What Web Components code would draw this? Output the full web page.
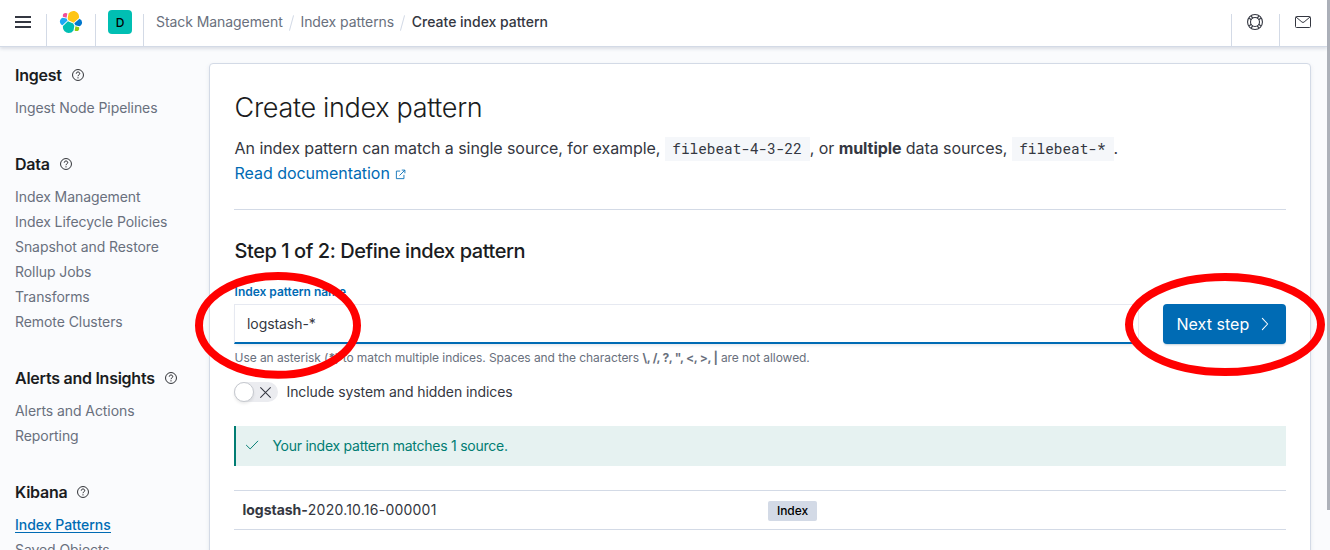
<!DOCTYPE html>
<html lang="en">
<head>
<meta charset="utf-8">
<title>Create index pattern</title>
<style>
html,body{margin:0;height:550px;overflow:hidden;background:#fafbfd}
body{font-family:Inter,"Liberation Sans",sans-serif;font-size:14px;letter-spacing:-.005em;color:#343741}
</style>
</head>
<body>
<kb-app></kb-app>
<script>
const define = (name, css, html) => customElements.define(name, class extends HTMLElement {
  constructor() {
    super();
    this.attachShadow({ mode: 'open' }).innerHTML = `<style>*{box-sizing:border-box}${css}</style>${html}`;
  }
});

const paths = {
  menu: '<path d="M0 3h16M0 8h16M0 13h16" stroke="#343741" stroke-width="2"/>',
  help: '<circle cx="8" cy="8" r="7.3" fill="none" stroke="currentColor" stroke-width="1.2"/><path d="M5.7 6.2C5.7 4.8 6.7 4 8 4s2.3.8 2.3 2.1c0 1.7-2.3 1.7-2.3 3.5" fill="none" stroke="currentColor" stroke-width="1.3"/><circle cx="8" cy="11.8" r=".85" fill="currentColor"/>',
  ring: '<g fill="none" stroke="currentColor"><circle cx="8" cy="8" r="7.45" stroke-width="1.1"/><circle cx="8" cy="8" r="4.5" stroke-width="1.1"/><path d="M2.2 4.3l2.2 1.5M4.3 2.2l1.5 2.2M13.8 4.3l-2.2 1.5M11.7 2.2l-1.5 2.2M2.2 11.7l2.2-1.5M4.3 13.8l1.5-2.2M13.8 11.7l-2.2-1.5M11.7 13.8l-1.5-2.2" stroke-width="1.2"/></g>',
  mail: '<rect x=".5" y="2.5" width="15" height="11" rx="1" fill="none" stroke="currentColor"/><path d="M1 3l5.9 5a1.7 1.7 0 0 0 2.2 0L15 3" fill="none" stroke="currentColor"/>',
  popout: '<g fill="none" stroke="currentColor" stroke-width="1.25"><path d="M7.5 3H2v11h11V8.5M9.8 1.6h4.6v4.6M14.2 1.8L6.5 9.5"/></g>',
  right: '<path d="M5 1.5l6 6.5-6 6.5" fill="none" stroke="currentColor" stroke-width="1.2" stroke-linecap="round" stroke-linejoin="round"/>',
  check: '<path d="M1.6 8.3l4.3 4.2L14.6 3.6" fill="none" stroke="currentColor" stroke-width="1.1" stroke-linecap="round" stroke-linejoin="round"/>',
  cross: '<path d="M2 2l12 12M14 2L2 14" fill="none" stroke="currentColor" stroke-width="1.3" stroke-linecap="round"/>'
};
customElements.define('kb-icon', class extends HTMLElement {
  constructor() { super(); this.attachShadow({ mode: 'open' }); }
  connectedCallback() {
    const s = this.getAttribute('size') || 16;
    this.shadowRoot.innerHTML = `<style>:host{display:inline-flex;flex:none}svg{display:block}</style><svg width="${s}" height="${s}" viewBox="0 0 16 16">${paths[this.getAttribute('type')]}</svg>`;
  }
});

define('kb-logo', ':host{display:block;height:24px}svg{display:block}', `
<svg width="24" height="24" viewBox="0 0 32 32">
<path fill="#FEC514" d="M12.58 13.787l7.002 3.211 7.066-6.213a7.85 7.85 0 0 0 .152-1.557c0-4.287-3.464-7.774-7.722-7.774a7.67 7.67 0 0 0-6.327 3.36l-1.176 6.126z"/>
<path fill="#00BFB3" d="M5.333 21.228a7.964 7.964 0 0 0-.154 1.58c0 4.301 3.475 7.799 7.747 7.799a7.724 7.724 0 0 0 6.389-3.406l1.166-6.108-1.556-2.989-7.03-3.218z"/>
<path fill="#F04E98" d="M5.288 9.067l4.8 1.138L11.14 4.73a3.785 3.785 0 0 0-2.28-.774 3.8 3.8 0 0 0-3.79 3.815c0 .444.074.88.218 1.296z"/>
<path fill="#1BA9F5" d="M4.872 10.214c-2.145.714-3.643 2.786-3.643 5.067 0 2.22 1.365 4.204 3.413 4.987l6.735-6.119-1.237-2.657z"/>
<path fill="#93C90E" d="M20.873 27.202c.652.504 1.45.782 2.27.782a3.8 3.8 0 0 0 3.79-3.814c0-.462-.073-.898-.218-1.296l-4.796-1.127z"/>
<path fill="#07C" d="M21.848 20.456l5.28 1.24c2.146-.714 3.645-2.786 3.645-5.068a5.324 5.324 0 0 0-3.42-4.968l-6.905 6.069z"/>
</svg>`);

define('kb-header', `
:host{display:flex;height:47px;width:1327px;background:#fff;border-bottom:1px solid #d3dae6;box-shadow:0 2px 3px rgba(152,162,179,.3);color:#343741;position:relative}
.cell{display:flex;justify-content:center;align-items:center;height:44px}
.end{justify-content:flex-start;padding-left:15px;width:47px}
.sep{width:1px;margin-top:14px;height:32px;background:#d3dae6;flex:none}
.space{width:24px;height:24px;border-radius:4px;background:#00bfb3;color:#000;font-weight:500;font-size:12px;display:flex;align-items:center;justify-content:center}
nav{display:flex;align-items:center;height:43px;padding-left:12px;color:#69707d;flex:1;white-space:nowrap}
i{width:1px;height:16px;margin:2px 8.4px 0;background:#d3dae6;transform:rotate(15deg)}
b{font-weight:500;color:#343741;letter-spacing:-.001em}`, `
<div class="cell" style="width:46px"><kb-icon type="menu"></kb-icon></div><div class="sep"></div>
<div class="cell" style="width:48px"><kb-logo></kb-logo></div><div class="sep"></div>
<div class="cell" style="width:48px;margin-right:-1px"><div class="space">D</div></div><div class="sep"></div>
<nav><span>Stack Management</span><i></i><span>Index patterns</span><i></i><b>Create index pattern</b></nav>
<div class="sep"></div><div class="cell end"><kb-icon type="ring"></kb-icon></div>
<div class="sep"></div><div class="cell end"><kb-icon type="mail"></kb-icon></div>`);

define('kb-nav-item', `:host{display:flex;align-items:center;height:25px;padding-bottom:2px;color:#69707d}
span{line-height:17px}:host([active]) span{color:#006bb4;font-weight:500;border-bottom:1px solid #006bb4;height:17px;line-height:18px;letter-spacing:-.001em}`, '<span><slot></slot></span>');

define('kb-nav-group', `:host{display:block;margin-bottom:31px}
header{display:flex;align-items:center;height:24px;gap:10px;margin-bottom:9px;font-size:16px;font-weight:600;color:#1a1c21;letter-spacing:-.016em}`,
'<header><slot name="title"></slot><kb-icon type="help" size="12"></kb-icon></header><slot></slot>');

define('kb-sidebar', ':host{display:block;width:209px;padding:16px 0 0 15px;flex:none;white-space:nowrap}', `
<kb-nav-group><span slot="title">Ingest</span><kb-nav-item>Ingest Node Pipelines</kb-nav-item></kb-nav-group>
<kb-nav-group><span slot="title">Data</span><kb-nav-item>Index Management</kb-nav-item><kb-nav-item>Index Lifecycle Policies</kb-nav-item><kb-nav-item>Snapshot and Restore</kb-nav-item><kb-nav-item>Rollup Jobs</kb-nav-item><kb-nav-item>Transforms</kb-nav-item><kb-nav-item>Remote Clusters</kb-nav-item></kb-nav-group>
<kb-nav-group><span slot="title">Alerts and Insights</span><kb-nav-item>Alerts and Actions</kb-nav-item><kb-nav-item>Reporting</kb-nav-item></kb-nav-group>
<kb-nav-group><span slot="title">Kibana</span><kb-nav-item active>Index Patterns</kb-nav-item><kb-nav-item>Saved Objects</kb-nav-item></kb-nav-group>`);

define('kb-code', `:host{display:inline-block;background:#f5f7fa;padding:0 8px 0 7.5px;height:24px;line-height:24px;font-family:"Roboto Mono","DejaVu Sans Mono",monospace;font-size:14.4px;letter-spacing:0;color:#343741}`, '<slot></slot>');

define('kb-intro', `:host{display:block;border-bottom:1px solid #d3dae6;height:122px;padding-left:.6px}
h1{margin:0;font-size:27px;font-weight:300;line-height:40px;color:#1a1c21;letter-spacing:-.012em}
p{margin:8px 0 0;font-size:16px;line-height:25px;white-space:nowrap;height:25px}
a{display:flex;align-items:center;height:23px;gap:5px;font-size:16px;color:#006bb4}
a span{letter-spacing:-.003em}
a kb-icon{margin-top:3px}
b{font-weight:700}`, `
<h1>Create index pattern</h1>
<p>An index pattern can match a single source, for example, <kb-code>filebeat-4-3-22</kb-code>, or <b>multiple</b> data sources, <kb-code>filebeat-*</kb-code>.</p>
<a><span>Read documentation</span><kb-icon type="popout" size="11"></kb-icon></a>`);

define('kb-button', `:host{display:flex;align-items:center;justify-content:space-between;width:123px;height:40px;padding:0 14px 0 13.5px;background:#006bb4;color:#fff;border-radius:4px;font-size:16px;letter-spacing:.002em;box-shadow:0 2px 2px -1px rgba(54,97,126,.3);white-space:nowrap}`, '<span><slot></slot></span><kb-icon type="right" size="14"></kb-icon>');

define('kb-switch', `:host{display:flex;align-items:center;gap:8.5px;height:20px}
.track{width:44px;height:20px;border-radius:10px;background:#ebecf0;display:flex;align-items:center;gap:5px}
.thumb{width:20px;height:20px;border-radius:50%;background:#fff;border:1px solid #c5c8ce;box-shadow:0 2px 3px rgba(0,0,0,.08)}
span{padding-bottom:2px;letter-spacing:-.006em}`,
'<div class="track"><div class="thumb"></div><kb-icon type="cross" size="13"></kb-icon></div><span><slot></slot></span>');

define('kb-form', `:host{display:block}
h2{margin:29px 0 0;padding-left:.6px;font-size:20px;line-height:24px;font-weight:500;color:#1a1c21;letter-spacing:-.022em}
.row{display:flex;gap:24px}
.field{flex:1}
label{display:block;margin-top:21px;padding-left:.6px;height:20px;line-height:15px;font-size:12px;font-weight:600;color:#006bb4;letter-spacing:-.002em}
.input{height:40px;border:1px solid #e6e9f1;border-bottom:2px solid #006bb4;padding:0 12px;line-height:38px;box-shadow:0 3px 3px -2px rgba(152,162,179,.3)}
.help{font-size:12px;line-height:18px;margin-top:5px;padding-left:.6px;color:#69707d;white-space:nowrap}
.help b{font-weight:700}
.help .chars{letter-spacing:-.29px}
kb-button{margin-top:41px}
kb-switch{margin-top:15px}`, `
<h2>Step 1 of 2: Define index pattern</h2>
<div class="row"><div class="field"><label>Index pattern name</label><div class="input">logstash-*</div>
<div class="help">Use an asterisk (<b>*</b>) to match multiple indices. Spaces and the characters <b class="chars">\\, /, ?, ", &lt;, &gt;, |</b> are not allowed.</div></div>
<kb-button>Next step</kb-button></div>
<kb-switch>Include system and hidden indices</kb-switch>`);

define('kb-callout', `:host{display:flex;align-items:center;height:40px;margin-top:24px;padding-left:9px;gap:13.4px;border-left:2px solid #017d73;background:#e6f2f1;color:#017d73;font-size:14px;letter-spacing:-.25px}
span{padding-bottom:2px}kb-icon{margin-bottom:2px}`, '<kb-icon type="check" size="14"></kb-icon><span><slot></slot></span>');

define('kb-table', `:host{display:grid;grid-template-columns:525.5px 1fr;align-items:center;height:40px;margin-top:24px;padding-left:8.5px;border:solid #d3dae6;border-width:1px 0}
.name{padding-bottom:2px;letter-spacing:.23px}
b{font-weight:700;letter-spacing:-.02px}.badge{justify-self:start;margin-top:2px;width:49px;text-align:center;height:20px;line-height:20px;border-radius:2px;background:#d3dae6;color:#000;font-size:12px;font-weight:500}`,
'<div class="name"><b>logstash-</b>2020.10.16-000001</div><div class="badge">Index</div>');

define('kb-panel', `:host{display:block;width:1102px;height:520px;margin-top:16px;padding:24px;border:1px solid #d3dae6;border-radius:4px;background:#fff;box-shadow:0 2px 4px rgba(152,162,179,.2)}`, '<slot></slot>');

define('kb-marks', ':host{position:absolute;inset:0;pointer-events:none}svg{display:block}', `
<svg width="1330" height="550" fill="none" stroke="#f00" stroke-width="8"><ellipse cx="278" cy="325.4" rx="79" ry="49.4"/><ellipse cx="1225" cy="324.5" rx="96" ry="47.5"/></svg>`);

define('kb-app', `:host{display:flex;height:550px;position:relative;overflow:hidden}
.page{width:1327px}.body{display:flex}
.bar{width:3px;height:510px;background:#adb1b9}`, `
<div class="page"><kb-header></kb-header><div class="body"><kb-sidebar></kb-sidebar>
<kb-panel><kb-intro></kb-intro><kb-form></kb-form><kb-callout>Your index pattern matches 1 source.</kb-callout><kb-table></kb-table></kb-panel></div></div>
<div class="bar"></div><kb-marks></kb-marks>`);
</script>
</body>
</html>
